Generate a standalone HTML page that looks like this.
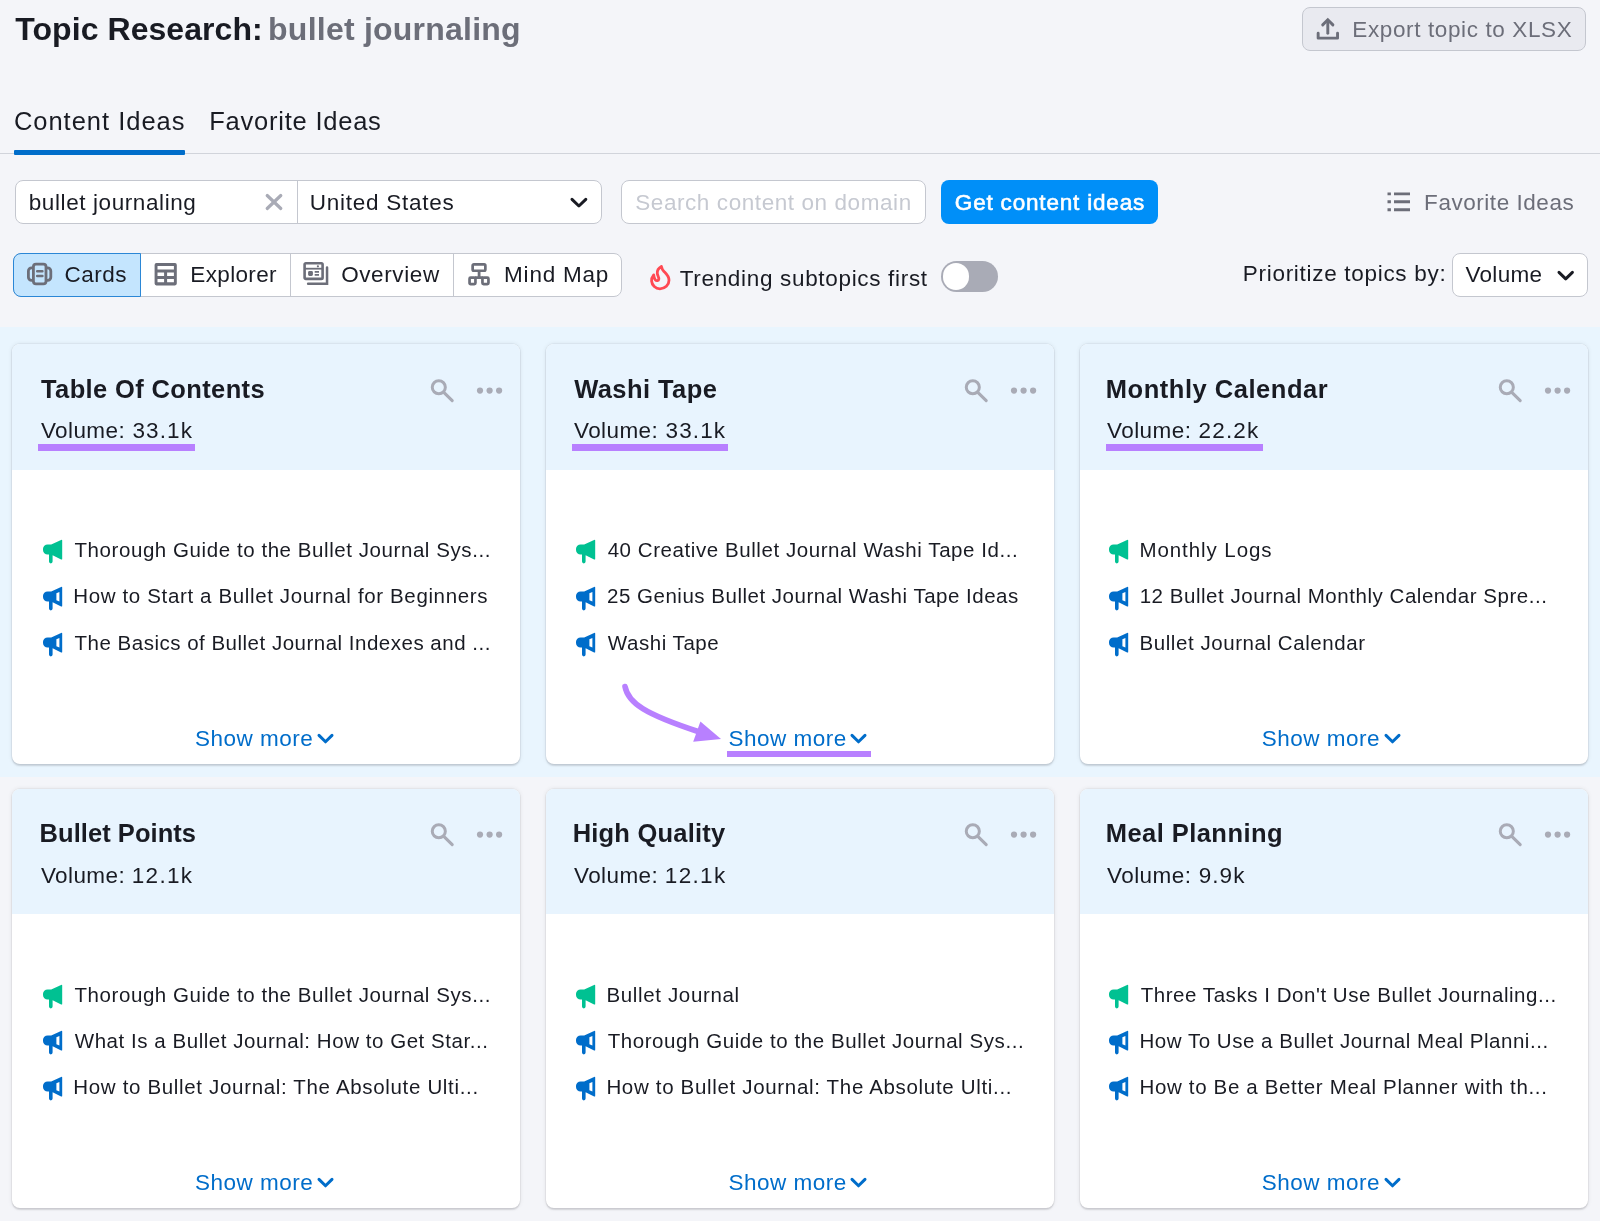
<!DOCTYPE html>
<html lang="en">
<head>
<meta charset="utf-8">
<title>Topic Research: bullet journaling</title>
<style>
*{box-sizing:border-box;margin:0;padding:0}
html,body{width:1600px;height:1221px;overflow:hidden}
body{background:#f4f5f9;font-family:"Liberation Sans",sans-serif;color:#191b23;position:relative}
#page{position:absolute;left:0;top:0;width:1600px;height:1221px;will-change:transform}
.abs{position:absolute}
.tx{position:absolute;white-space:pre;line-height:1}
svg{position:absolute;overflow:visible}
.box{position:absolute;background:#fff;border:1px solid #c4c7cf;border-radius:8px}
#band{left:0;top:327px;width:1600px;height:450px;background:#e9f5fe}
.card{position:absolute;width:508.4px;height:420px;background:#fff;border-radius:8px;box-shadow:0 0 0 1px rgba(25,27,35,.035),0 0 5px rgba(25,27,35,.09),0 1.5px 1.5px rgba(25,27,35,.12);overflow:hidden}
.card .hd{position:absolute;left:0;top:0;width:100%;height:125.8px;background:#e8f4fe}
.hl{position:absolute;background:#b880ff;height:6.5px}
</style>
</head>
<body>
<div id="page">
<div id="band" class="abs"></div>

<!-- export button -->
<div class="abs" style="left:1301.5px;top:7px;width:284.5px;height:44px;border:1px solid #c4c7cf;border-radius:8px;background:#e9eaf0"></div>
<svg width="24" height="24" viewBox="0 0 24 24" style="left:1316px;top:17px"><g fill="none" stroke="#6c6e79" stroke-width="2.9" stroke-linecap="round"><path d="M2.15 16.3 V21.15 H21.55 V16.3" stroke-linejoin="round"/><path d="M11.8 16.2 V3.4"/><path d="M6.7 7.9 L11.8 2.8 L16.9 7.9" stroke-linejoin="miter"/></g></svg>

<!-- tabs -->
<div class="abs" style="left:0;top:153px;width:1600px;height:1px;background:#d1d4db"></div>
<div class="abs" style="left:14.25px;top:149.5px;width:170.25px;height:5px;background:#006dca;border-radius:1px"></div>

<!-- filter row -->
<div class="box" style="left:14.5px;top:179.5px;width:587px;height:44px"></div>
<div class="abs" style="left:297px;top:180.5px;width:1px;height:42px;background:#c4c7cf"></div>
<svg width="18" height="18" viewBox="0 0 18 18" style="left:264.75px;top:192.5px"><path d="M2.2 2.5 L15.8 15.5 M15.8 2.5 L2.2 15.5" stroke="#a9abb6" stroke-width="3.2" stroke-linecap="round"/></svg>
<svg width="18" height="12" viewBox="0 0 18 12" style="left:569.5px;top:197px"><path d="M2 2.4 L8.9 9 L15.8 2.4" fill="none" stroke="#191b23" stroke-width="3" stroke-linecap="round" stroke-linejoin="round"/></svg>
<div class="box" style="left:621px;top:179.5px;width:304.5px;height:44px"></div>
<div class="abs" style="left:941.25px;top:179.5px;width:216.25px;height:44.25px;border-radius:8px;background:#008ff8"></div>
<svg width="24" height="20" viewBox="0 0 24 20" style="left:1387px;top:191.5px"><path d="M7 1.85 H23 M7 9.8 H23 M7 17.75 H23 M.5 1.85 H3.9 M.5 9.8 H3.9 M.5 17.75 H3.9" stroke="#6c6e79" stroke-width="2.9"/></svg>

<!-- view switch -->
<div class="box" style="left:13px;top:252.5px;width:608.5px;height:44.25px"></div>
<div class="abs" style="left:13px;top:252.5px;width:127.5px;height:44.25px;background:#c4e5fe;border:1px solid #2b87d6;border-radius:8px 0 0 8px"></div>
<div class="abs" style="left:289.5px;top:253.5px;width:1px;height:42px;background:#c4c7cf"></div>
<div class="abs" style="left:453px;top:253.5px;width:1px;height:42px;background:#c4c7cf"></div>
<!-- icons: cards, explorer, overview, mindmap -->
<svg width="26" height="24" viewBox="0 0 26 24" style="left:27px;top:262px"><g fill="none" stroke="#6c6e79" stroke-width="2.8"><path d="M6.2 5.9 H4.6 a3.2 3.2 0 0 0 -3.2 3.2 V15.2 a3.2 3.2 0 0 0 3.2 3.2 H6.2 M19.2 5.9 H20.6 a3.2 3.2 0 0 1 3.2 3.2 V15.2 a3.2 3.2 0 0 1 -3.2 3.2 H19.2"/><rect x="6.4" y="2.2" width="12.6" height="19.6" rx="2.6"/><path d="M10.2 9.3 H15.4 M10.2 14 H15.4" stroke-width="2.5" stroke-linecap="round"/></g></svg>
<svg width="24" height="24" viewBox="0 0 24 24" style="left:154px;top:262px"><path fill-rule="evenodd" fill="#6c6e79" d="M2.4 1.1 H21 A1.8 1.8 0 0 1 22.8 2.9 V21.6 A1.8 1.8 0 0 1 21 23.4 H2.4 A1.8 1.8 0 0 1 .6 21.6 V2.9 A1.8 1.8 0 0 1 2.4 1.1Z M3.5 4 V7.6 H19.9 V4Z M3.5 10.5 V13.9 H10.1 V10.5Z M13.1 10.5 V13.9 H19.9 V10.5Z M3.5 16.9 V20.2 H10.1 V16.9Z M13.1 16.9 V20.2 H19.9 V16.9Z"/></svg>
<svg width="26" height="24" viewBox="0 0 26 24" style="left:303px;top:261px"><g fill="none" stroke="#6c6e79"><rect x="1.6" y="2.2" width="18" height="15.7" rx="1.2" stroke-width="2.6"/><path d="M2 7.7 H19" stroke-width="1.8"/><path d="M11.7 10.8 H16 M11.7 13.9 H16" stroke-width="1.7"/><path d="M24.05 6.6 V22.65 H5.1" stroke-width="2.5" stroke-linecap="round" stroke-linejoin="miter"/></g><rect x="5.1" y="9.9" width="4.8" height="5" rx="1.3" fill="#6c6e79"/><circle cx="14.9" cy="5.3" r="1.1" fill="#6c6e79"/></svg>
<svg width="24" height="24" viewBox="0 0 24 24" style="left:467px;top:262px"><g fill="none" stroke="#6c6e79" stroke-width="2.7"><rect x="5.65" y="2.45" width="12.7" height="6.3" rx="1.2"/><rect x="2.55" y="15.55" width="5.9" height="6.5" rx="1.1"/><rect x="15.45" y="15.55" width="6" height="6.5" rx="1.1"/><path d="M12.1 9.5 V15 M8 15.55 H16" stroke-width="2.8"/></g></svg>
<!-- flame -->
<svg width="22" height="28" viewBox="0 0 22 28" style="left:649px;top:264px"><path d="M4.7 10.8 C3 13 2.4 15 2.6 17 C3 21.5 6.5 24.8 11 24.8 C16 24.8 20 21 20 16.2 C20 12 17 9.5 15 7.5 C13.6 6 12.8 4.4 12.4 2.4 C9.5 4 8 6.5 8.3 9.5 C8.5 11.5 10 13 9.8 15 C9.6 16.8 7.5 17.2 6.3 15.8 C5.3 14.6 4.9 12.8 4.7 10.8Z" fill="none" stroke="#ff4953" stroke-width="2.8" stroke-linejoin="round"/></svg>
<!-- toggle -->
<div class="abs" style="left:940.5px;top:260.75px;width:57px;height:31.25px;border-radius:16px;background:#a9abb6"></div>
<div class="abs" style="left:943px;top:263.25px;width:26.25px;height:26.25px;border-radius:50%;background:#fff"></div>
<!-- select -->
<div class="box" style="left:1451.5px;top:252.5px;width:136px;height:44px"></div>
<svg width="18" height="12" viewBox="0 0 18 12" style="left:1556.5px;top:270px"><path d="M2 2.4 L8.7 8.8 L15.4 2.4" fill="none" stroke="#191b23" stroke-width="3" stroke-linecap="round" stroke-linejoin="round"/></svg>

<div class="tx" style="left:15.25px;top:13px;font-size:32px;letter-spacing:0.062px;color:#191b23;font-weight:700">Topic Research:</div>
<div class="tx" style="left:268.10px;top:13px;font-size:32px;letter-spacing:0.229px;color:#6c6e79;font-weight:700">bullet journaling</div>
<div class="tx" style="left:1352.35px;top:19px;font-size:22.5px;letter-spacing:0.621px;color:#6c6e79">Export topic to XLSX</div>
<div class="tx" style="left:13.89px;top:109px;font-size:25.5px;letter-spacing:0.988px;color:#191b23">Content Ideas</div>
<div class="tx" style="left:209.25px;top:109px;font-size:25.5px;letter-spacing:0.770px;color:#191b23">Favorite Ideas</div>
<div class="tx" style="left:28.73px;top:192px;font-size:22.5px;letter-spacing:0.596px;color:#191b23">bullet journaling</div>
<div class="tx" style="left:309.70px;top:192px;font-size:22.5px;letter-spacing:0.745px;color:#191b23">United States</div>
<div class="tx" style="left:635.21px;top:192px;font-size:22.5px;letter-spacing:0.579px;color:#c6c9d1">Search content on domain</div>
<div class="tx" style="left:954.86px;top:192px;font-size:22.5px;letter-spacing:0.812px;color:#fff;font-weight:400;-webkit-text-stroke:0.6px currentColor">Get content ideas</div>
<div class="tx" style="left:1424.10px;top:192px;font-size:22.5px;letter-spacing:0.541px;color:#6c6e79">Favorite Ideas</div>
<div class="tx" style="left:64.50px;top:264px;font-size:22.5px;letter-spacing:0.472px;color:#191b23">Cards</div>
<div class="tx" style="left:190.35px;top:264px;font-size:22.5px;letter-spacing:0.337px;color:#191b23">Explorer</div>
<div class="tx" style="left:341.17px;top:264px;font-size:22.5px;letter-spacing:0.603px;color:#191b23">Overview</div>
<div class="tx" style="left:504.10px;top:264px;font-size:22.5px;letter-spacing:0.772px;color:#191b23">Mind Map</div>
<div class="tx" style="left:679.70px;top:268px;font-size:22.5px;letter-spacing:0.679px;color:#191b23">Trending subtopics first</div>
<div class="tx" style="left:1242.85px;top:263px;font-size:22.5px;letter-spacing:0.700px;color:#191b23">Prioritize topics by:</div>
<div class="tx" style="left:1465.39px;top:264px;font-size:22.5px;letter-spacing:0.335px;color:#191b23">Volume</div>

<!-- CARDS -->
<div class="card" style="left:12px;top:344px;height:420px">
<div class="hd"></div>
<h3 class="tx" style="left:29.03px;top:33px;font-size:25.5px;letter-spacing:0.372px;color:#191b23;font-weight:700">Table Of Contents</h3>
<div class="tx" style="left:28.89px;top:76px;font-size:22.5px;letter-spacing:0.420px;color:#191b23">Volume:</div>
<div class="tx" style="left:120.50px;top:76px;font-size:22.5px;letter-spacing:1.089px;color:#191b23">33.1k</div>
<svg width="32" height="32" viewBox="0 0 32 32" style="left:411px;top:29px"><circle cx="15.8" cy="14.2" r="6.55" fill="none" stroke="#a9abb6" stroke-width="3"/><path d="M20.8 19.4 L29.2 27.6" stroke="#a9abb6" stroke-width="3.1" stroke-linecap="round"/></svg>
<svg width="30" height="10" viewBox="0 0 30 10" style="left:464px;top:42px"><circle cx="4" cy="4.6" r="3.1" fill="#a9abb6"/><circle cx="13.6" cy="4.6" r="3.1" fill="#a9abb6"/><circle cx="23.1" cy="4.6" r="3.1" fill="#a9abb6"/></svg>
<svg width="20" height="25" viewBox="0 0 20 25" style="left:31.1px;top:195px"><path fill-rule="evenodd" d="M19.2 1.6 Q19.2 .4 18.1 .9 L8.2 5.4 H4.6 A4.6 4.6 0 0 0 0 10 v1 A4.6 4.6 0 0 0 4.6 15.6 H6 V22.6 a1.8 1.8 0 0 0 3.6 0 V16.2 L18.1 20.4 Q19.2 20.9 19.2 19.7Z" fill="#00c192"/></svg>
<div class="tx" style="left:62.54px;top:196px;font-size:20.5px;letter-spacing:0.567px;color:#191b23">Thorough Guide to the Bullet Journal Sys...</div>
<svg width="20" height="25" viewBox="0 0 20 25" style="left:31.1px;top:241.5px"><path fill-rule="evenodd" d="M19.2 1.6 Q19.2 .4 18.1 .9 L8.2 5.4 H4.6 A4.6 4.6 0 0 0 0 10 v1 A4.6 4.6 0 0 0 4.6 15.6 H6 V22.6 a1.8 1.8 0 0 0 3.6 0 V16.2 L18.1 20.4 Q19.2 20.9 19.2 19.7Z M16.4 5.9 L13.4 7.2 V14.3 L16.4 15.6Z" fill="#006dca"/></svg>
<div class="tx" style="left:61.29px;top:242px;font-size:20.5px;letter-spacing:0.637px;color:#191b23">How to Start a Bullet Journal for Beginners</div>
<svg width="20" height="25" viewBox="0 0 20 25" style="left:31.1px;top:287.5px"><path fill-rule="evenodd" d="M19.2 1.6 Q19.2 .4 18.1 .9 L8.2 5.4 H4.6 A4.6 4.6 0 0 0 0 10 v1 A4.6 4.6 0 0 0 4.6 15.6 H6 V22.6 a1.8 1.8 0 0 0 3.6 0 V16.2 L18.1 20.4 Q19.2 20.9 19.2 19.7Z M16.4 5.9 L13.4 7.2 V14.3 L16.4 15.6Z" fill="#006dca"/></svg>
<div class="tx" style="left:62.54px;top:289px;font-size:20.5px;letter-spacing:0.501px;color:#191b23">The Basics of Bullet Journal Indexes and ...</div>
<div class="tx" style="left:182.95px;top:384px;font-size:22.5px;letter-spacing:0.492px;color:#006dca">Show more</div>
<svg width="18" height="12" viewBox="0 0 18 12" style="left:304.84px;top:389px"><path d="M2 2.4 L8.5 8.8 L15 2.4" fill="none" stroke="#006dca" stroke-width="3" stroke-linecap="round" stroke-linejoin="round"/></svg>
</div>
<div class="card" style="left:546px;top:344px;height:420px">
<div class="hd"></div>
<h3 class="tx" style="left:28.20px;top:33px;font-size:25.5px;letter-spacing:0.420px;color:#191b23;font-weight:700">Washi Tape</h3>
<div class="tx" style="left:27.99px;top:76px;font-size:22.5px;letter-spacing:0.420px;color:#191b23">Volume:</div>
<div class="tx" style="left:119.60px;top:76px;font-size:22.5px;letter-spacing:1.089px;color:#191b23">33.1k</div>
<svg width="32" height="32" viewBox="0 0 32 32" style="left:411px;top:29px"><circle cx="15.8" cy="14.2" r="6.55" fill="none" stroke="#a9abb6" stroke-width="3"/><path d="M20.8 19.4 L29.2 27.6" stroke="#a9abb6" stroke-width="3.1" stroke-linecap="round"/></svg>
<svg width="30" height="10" viewBox="0 0 30 10" style="left:464px;top:42px"><circle cx="4" cy="4.6" r="3.1" fill="#a9abb6"/><circle cx="13.6" cy="4.6" r="3.1" fill="#a9abb6"/><circle cx="23.1" cy="4.6" r="3.1" fill="#a9abb6"/></svg>
<svg width="20" height="25" viewBox="0 0 20 25" style="left:30.2px;top:195px"><path fill-rule="evenodd" d="M19.2 1.6 Q19.2 .4 18.1 .9 L8.2 5.4 H4.6 A4.6 4.6 0 0 0 0 10 v1 A4.6 4.6 0 0 0 4.6 15.6 H6 V22.6 a1.8 1.8 0 0 0 3.6 0 V16.2 L18.1 20.4 Q19.2 20.9 19.2 19.7Z" fill="#00c192"/></svg>
<div class="tx" style="left:61.64px;top:196px;font-size:20.5px;letter-spacing:0.568px;color:#191b23">40 Creative Bullet Journal Washi Tape Id...</div>
<svg width="20" height="25" viewBox="0 0 20 25" style="left:30.2px;top:241.5px"><path fill-rule="evenodd" d="M19.2 1.6 Q19.2 .4 18.1 .9 L8.2 5.4 H4.6 A4.6 4.6 0 0 0 0 10 v1 A4.6 4.6 0 0 0 4.6 15.6 H6 V22.6 a1.8 1.8 0 0 0 3.6 0 V16.2 L18.1 20.4 Q19.2 20.9 19.2 19.7Z M16.4 5.9 L13.4 7.2 V14.3 L16.4 15.6Z" fill="#006dca"/></svg>
<div class="tx" style="left:61.08px;top:242px;font-size:20.5px;letter-spacing:0.508px;color:#191b23">25 Genius Bullet Journal Washi Tape Ideas</div>
<svg width="20" height="25" viewBox="0 0 20 25" style="left:30.2px;top:287.5px"><path fill-rule="evenodd" d="M19.2 1.6 Q19.2 .4 18.1 .9 L8.2 5.4 H4.6 A4.6 4.6 0 0 0 0 10 v1 A4.6 4.6 0 0 0 4.6 15.6 H6 V22.6 a1.8 1.8 0 0 0 3.6 0 V16.2 L18.1 20.4 Q19.2 20.9 19.2 19.7Z M16.4 5.9 L13.4 7.2 V14.3 L16.4 15.6Z" fill="#006dca"/></svg>
<div class="tx" style="left:61.86px;top:289px;font-size:20.5px;letter-spacing:0.540px;color:#191b23">Washi Tape</div>
<div class="tx" style="left:182.41px;top:384px;font-size:22.5px;letter-spacing:0.492px;color:#006dca">Show more</div>
<svg width="18" height="12" viewBox="0 0 18 12" style="left:304.3px;top:389px"><path d="M2 2.4 L8.5 8.8 L15 2.4" fill="none" stroke="#006dca" stroke-width="3" stroke-linecap="round" stroke-linejoin="round"/></svg>
</div>
<div class="card" style="left:1080px;top:344px;height:420px">
<div class="hd"></div>
<h3 class="tx" style="left:25.77px;top:33px;font-size:25.5px;letter-spacing:0.532px;color:#191b23;font-weight:700">Monthly Calendar</h3>
<div class="tx" style="left:27.09px;top:76px;font-size:22.5px;letter-spacing:0.420px;color:#191b23">Volume:</div>
<div class="tx" style="left:118.50px;top:76px;font-size:22.5px;letter-spacing:1.187px;color:#191b23">22.2k</div>
<svg width="32" height="32" viewBox="0 0 32 32" style="left:411px;top:29px"><circle cx="15.8" cy="14.2" r="6.55" fill="none" stroke="#a9abb6" stroke-width="3"/><path d="M20.8 19.4 L29.2 27.6" stroke="#a9abb6" stroke-width="3.1" stroke-linecap="round"/></svg>
<svg width="30" height="10" viewBox="0 0 30 10" style="left:464px;top:42px"><circle cx="4" cy="4.6" r="3.1" fill="#a9abb6"/><circle cx="13.6" cy="4.6" r="3.1" fill="#a9abb6"/><circle cx="23.1" cy="4.6" r="3.1" fill="#a9abb6"/></svg>
<svg width="20" height="25" viewBox="0 0 20 25" style="left:29.3px;top:195px"><path fill-rule="evenodd" d="M19.2 1.6 Q19.2 .4 18.1 .9 L8.2 5.4 H4.6 A4.6 4.6 0 0 0 0 10 v1 A4.6 4.6 0 0 0 4.6 15.6 H6 V22.6 a1.8 1.8 0 0 0 3.6 0 V16.2 L18.1 20.4 Q19.2 20.9 19.2 19.7Z" fill="#00c192"/></svg>
<div class="tx" style="left:59.49px;top:196px;font-size:20.5px;letter-spacing:0.919px;color:#191b23">Monthly Logs</div>
<svg width="20" height="25" viewBox="0 0 20 25" style="left:29.3px;top:241.5px"><path fill-rule="evenodd" d="M19.2 1.6 Q19.2 .4 18.1 .9 L8.2 5.4 H4.6 A4.6 4.6 0 0 0 0 10 v1 A4.6 4.6 0 0 0 4.6 15.6 H6 V22.6 a1.8 1.8 0 0 0 3.6 0 V16.2 L18.1 20.4 Q19.2 20.9 19.2 19.7Z M16.4 5.9 L13.4 7.2 V14.3 L16.4 15.6Z" fill="#006dca"/></svg>
<div class="tx" style="left:59.63px;top:242px;font-size:20.5px;letter-spacing:0.540px;color:#191b23">12 Bullet Journal Monthly Calendar Spre...</div>
<svg width="20" height="25" viewBox="0 0 20 25" style="left:29.3px;top:287.5px"><path fill-rule="evenodd" d="M19.2 1.6 Q19.2 .4 18.1 .9 L8.2 5.4 H4.6 A4.6 4.6 0 0 0 0 10 v1 A4.6 4.6 0 0 0 4.6 15.6 H6 V22.6 a1.8 1.8 0 0 0 3.6 0 V16.2 L18.1 20.4 Q19.2 20.9 19.2 19.7Z M16.4 5.9 L13.4 7.2 V14.3 L16.4 15.6Z" fill="#006dca"/></svg>
<div class="tx" style="left:59.49px;top:289px;font-size:20.5px;letter-spacing:0.563px;color:#191b23">Bullet Journal Calendar</div>
<div class="tx" style="left:181.87px;top:384px;font-size:22.5px;letter-spacing:0.492px;color:#006dca">Show more</div>
<svg width="18" height="12" viewBox="0 0 18 12" style="left:303.76px;top:389px"><path d="M2 2.4 L8.5 8.8 L15 2.4" fill="none" stroke="#006dca" stroke-width="3" stroke-linecap="round" stroke-linejoin="round"/></svg>
</div>
<div class="card" style="left:12px;top:788.5px;height:419.8px">
<div class="hd"></div>
<h3 class="tx" style="left:27.57px;top:32.5px;font-size:25.5px;letter-spacing:0.052px;color:#191b23;font-weight:700">Bullet Points</h3>
<div class="tx" style="left:28.89px;top:76.5px;font-size:22.5px;letter-spacing:0.420px;color:#191b23">Volume:</div>
<div class="tx" style="left:119.76px;top:76.5px;font-size:22.5px;letter-spacing:1.322px;color:#191b23">12.1k</div>
<svg width="32" height="32" viewBox="0 0 32 32" style="left:411px;top:28.5px"><circle cx="15.8" cy="14.2" r="6.55" fill="none" stroke="#a9abb6" stroke-width="3"/><path d="M20.8 19.4 L29.2 27.6" stroke="#a9abb6" stroke-width="3.1" stroke-linecap="round"/></svg>
<svg width="30" height="10" viewBox="0 0 30 10" style="left:464px;top:41.5px"><circle cx="4" cy="4.6" r="3.1" fill="#a9abb6"/><circle cx="13.6" cy="4.6" r="3.1" fill="#a9abb6"/><circle cx="23.1" cy="4.6" r="3.1" fill="#a9abb6"/></svg>
<svg width="20" height="25" viewBox="0 0 20 25" style="left:31.1px;top:195px"><path fill-rule="evenodd" d="M19.2 1.6 Q19.2 .4 18.1 .9 L8.2 5.4 H4.6 A4.6 4.6 0 0 0 0 10 v1 A4.6 4.6 0 0 0 4.6 15.6 H6 V22.6 a1.8 1.8 0 0 0 3.6 0 V16.2 L18.1 20.4 Q19.2 20.9 19.2 19.7Z" fill="#00c192"/></svg>
<div class="tx" style="left:62.54px;top:196.5px;font-size:20.5px;letter-spacing:0.567px;color:#191b23">Thorough Guide to the Bullet Journal Sys...</div>
<svg width="20" height="25" viewBox="0 0 20 25" style="left:31.1px;top:241.5px"><path fill-rule="evenodd" d="M19.2 1.6 Q19.2 .4 18.1 .9 L8.2 5.4 H4.6 A4.6 4.6 0 0 0 0 10 v1 A4.6 4.6 0 0 0 4.6 15.6 H6 V22.6 a1.8 1.8 0 0 0 3.6 0 V16.2 L18.1 20.4 Q19.2 20.9 19.2 19.7Z M16.4 5.9 L13.4 7.2 V14.3 L16.4 15.6Z" fill="#006dca"/></svg>
<div class="tx" style="left:62.76px;top:242.5px;font-size:20.5px;letter-spacing:0.547px;color:#191b23">What Is a Bullet Journal: How to Get Star...</div>
<svg width="20" height="25" viewBox="0 0 20 25" style="left:31.1px;top:287.5px"><path fill-rule="evenodd" d="M19.2 1.6 Q19.2 .4 18.1 .9 L8.2 5.4 H4.6 A4.6 4.6 0 0 0 0 10 v1 A4.6 4.6 0 0 0 4.6 15.6 H6 V22.6 a1.8 1.8 0 0 0 3.6 0 V16.2 L18.1 20.4 Q19.2 20.9 19.2 19.7Z M16.4 5.9 L13.4 7.2 V14.3 L16.4 15.6Z" fill="#006dca"/></svg>
<div class="tx" style="left:61.29px;top:288.5px;font-size:20.5px;letter-spacing:0.667px;color:#191b23">How to Bullet Journal: The Absolute Ulti...</div>
<div class="tx" style="left:182.95px;top:383.5px;font-size:22.5px;letter-spacing:0.492px;color:#006dca">Show more</div>
<svg width="18" height="12" viewBox="0 0 18 12" style="left:304.84px;top:388.5px"><path d="M2 2.4 L8.5 8.8 L15 2.4" fill="none" stroke="#006dca" stroke-width="3" stroke-linecap="round" stroke-linejoin="round"/></svg>
</div>
<div class="card" style="left:546px;top:788.5px;height:419.8px">
<div class="hd"></div>
<h3 class="tx" style="left:26.67px;top:32.5px;font-size:25.5px;letter-spacing:0.211px;color:#191b23;font-weight:700">High Quality</h3>
<div class="tx" style="left:27.99px;top:76.5px;font-size:22.5px;letter-spacing:0.420px;color:#191b23">Volume:</div>
<div class="tx" style="left:118.86px;top:76.5px;font-size:22.5px;letter-spacing:1.322px;color:#191b23">12.1k</div>
<svg width="32" height="32" viewBox="0 0 32 32" style="left:411px;top:28.5px"><circle cx="15.8" cy="14.2" r="6.55" fill="none" stroke="#a9abb6" stroke-width="3"/><path d="M20.8 19.4 L29.2 27.6" stroke="#a9abb6" stroke-width="3.1" stroke-linecap="round"/></svg>
<svg width="30" height="10" viewBox="0 0 30 10" style="left:464px;top:41.5px"><circle cx="4" cy="4.6" r="3.1" fill="#a9abb6"/><circle cx="13.6" cy="4.6" r="3.1" fill="#a9abb6"/><circle cx="23.1" cy="4.6" r="3.1" fill="#a9abb6"/></svg>
<svg width="20" height="25" viewBox="0 0 20 25" style="left:30.2px;top:195px"><path fill-rule="evenodd" d="M19.2 1.6 Q19.2 .4 18.1 .9 L8.2 5.4 H4.6 A4.6 4.6 0 0 0 0 10 v1 A4.6 4.6 0 0 0 4.6 15.6 H6 V22.6 a1.8 1.8 0 0 0 3.6 0 V16.2 L18.1 20.4 Q19.2 20.9 19.2 19.7Z" fill="#00c192"/></svg>
<div class="tx" style="left:60.39px;top:196.5px;font-size:20.5px;letter-spacing:0.657px;color:#191b23">Bullet Journal</div>
<svg width="20" height="25" viewBox="0 0 20 25" style="left:30.2px;top:241.5px"><path fill-rule="evenodd" d="M19.2 1.6 Q19.2 .4 18.1 .9 L8.2 5.4 H4.6 A4.6 4.6 0 0 0 0 10 v1 A4.6 4.6 0 0 0 4.6 15.6 H6 V22.6 a1.8 1.8 0 0 0 3.6 0 V16.2 L18.1 20.4 Q19.2 20.9 19.2 19.7Z M16.4 5.9 L13.4 7.2 V14.3 L16.4 15.6Z" fill="#006dca"/></svg>
<div class="tx" style="left:61.64px;top:242.5px;font-size:20.5px;letter-spacing:0.571px;color:#191b23">Thorough Guide to the Bullet Journal Sys...</div>
<svg width="20" height="25" viewBox="0 0 20 25" style="left:30.2px;top:287.5px"><path fill-rule="evenodd" d="M19.2 1.6 Q19.2 .4 18.1 .9 L8.2 5.4 H4.6 A4.6 4.6 0 0 0 0 10 v1 A4.6 4.6 0 0 0 4.6 15.6 H6 V22.6 a1.8 1.8 0 0 0 3.6 0 V16.2 L18.1 20.4 Q19.2 20.9 19.2 19.7Z M16.4 5.9 L13.4 7.2 V14.3 L16.4 15.6Z" fill="#006dca"/></svg>
<div class="tx" style="left:60.39px;top:288.5px;font-size:20.5px;letter-spacing:0.674px;color:#191b23">How to Bullet Journal: The Absolute Ulti...</div>
<div class="tx" style="left:182.41px;top:383.5px;font-size:22.5px;letter-spacing:0.492px;color:#006dca">Show more</div>
<svg width="18" height="12" viewBox="0 0 18 12" style="left:304.3px;top:388.5px"><path d="M2 2.4 L8.5 8.8 L15 2.4" fill="none" stroke="#006dca" stroke-width="3" stroke-linecap="round" stroke-linejoin="round"/></svg>
</div>
<div class="card" style="left:1080px;top:788.5px;height:419.8px">
<div class="hd"></div>
<h3 class="tx" style="left:25.77px;top:32.5px;font-size:25.5px;letter-spacing:0.443px;color:#191b23;font-weight:700">Meal Planning</h3>
<div class="tx" style="left:27.09px;top:76.5px;font-size:22.5px;letter-spacing:0.420px;color:#191b23">Volume:</div>
<div class="tx" style="left:118.67px;top:76.5px;font-size:22.5px;letter-spacing:1.085px;color:#191b23">9.9k</div>
<svg width="32" height="32" viewBox="0 0 32 32" style="left:411px;top:28.5px"><circle cx="15.8" cy="14.2" r="6.55" fill="none" stroke="#a9abb6" stroke-width="3"/><path d="M20.8 19.4 L29.2 27.6" stroke="#a9abb6" stroke-width="3.1" stroke-linecap="round"/></svg>
<svg width="30" height="10" viewBox="0 0 30 10" style="left:464px;top:41.5px"><circle cx="4" cy="4.6" r="3.1" fill="#a9abb6"/><circle cx="13.6" cy="4.6" r="3.1" fill="#a9abb6"/><circle cx="23.1" cy="4.6" r="3.1" fill="#a9abb6"/></svg>
<svg width="20" height="25" viewBox="0 0 20 25" style="left:29.3px;top:195px"><path fill-rule="evenodd" d="M19.2 1.6 Q19.2 .4 18.1 .9 L8.2 5.4 H4.6 A4.6 4.6 0 0 0 0 10 v1 A4.6 4.6 0 0 0 4.6 15.6 H6 V22.6 a1.8 1.8 0 0 0 3.6 0 V16.2 L18.1 20.4 Q19.2 20.9 19.2 19.7Z" fill="#00c192"/></svg>
<div class="tx" style="left:60.74px;top:196.5px;font-size:20.5px;letter-spacing:0.543px;color:#191b23">Three Tasks I Don't Use Bullet Journaling...</div>
<svg width="20" height="25" viewBox="0 0 20 25" style="left:29.3px;top:241.5px"><path fill-rule="evenodd" d="M19.2 1.6 Q19.2 .4 18.1 .9 L8.2 5.4 H4.6 A4.6 4.6 0 0 0 0 10 v1 A4.6 4.6 0 0 0 4.6 15.6 H6 V22.6 a1.8 1.8 0 0 0 3.6 0 V16.2 L18.1 20.4 Q19.2 20.9 19.2 19.7Z M16.4 5.9 L13.4 7.2 V14.3 L16.4 15.6Z" fill="#006dca"/></svg>
<div class="tx" style="left:59.49px;top:242.5px;font-size:20.5px;letter-spacing:0.526px;color:#191b23">How To Use a Bullet Journal Meal Planni...</div>
<svg width="20" height="25" viewBox="0 0 20 25" style="left:29.3px;top:287.5px"><path fill-rule="evenodd" d="M19.2 1.6 Q19.2 .4 18.1 .9 L8.2 5.4 H4.6 A4.6 4.6 0 0 0 0 10 v1 A4.6 4.6 0 0 0 4.6 15.6 H6 V22.6 a1.8 1.8 0 0 0 3.6 0 V16.2 L18.1 20.4 Q19.2 20.9 19.2 19.7Z M16.4 5.9 L13.4 7.2 V14.3 L16.4 15.6Z" fill="#006dca"/></svg>
<div class="tx" style="left:59.49px;top:288.5px;font-size:20.5px;letter-spacing:0.654px;color:#191b23">How to Be a Better Meal Planner with th...</div>
<div class="tx" style="left:181.87px;top:383.5px;font-size:22.5px;letter-spacing:0.492px;color:#006dca">Show more</div>
<svg width="18" height="12" viewBox="0 0 18 12" style="left:303.76px;top:388.5px"><path d="M2 2.4 L8.5 8.8 L15 2.4" fill="none" stroke="#006dca" stroke-width="3" stroke-linecap="round" stroke-linejoin="round"/></svg>
</div>

<!-- annotations -->
<div class="hl" style="left:37.75px;top:444.4px;width:157.25px"></div>
<div class="hl" style="left:572.1px;top:444.4px;width:155.7px"></div>
<div class="hl" style="left:1105.5px;top:444.4px;width:157px"></div>
<div class="hl" style="left:726.9px;top:751.1px;width:143.7px;height:6.4px"></div>
<svg width="110" height="70" viewBox="0 0 110 70" style="left:615px;top:680.7px"><path d="M10 5.5 C13 22 30 33 83 50.5" fill="none" stroke="#b880ff" stroke-width="5.6" stroke-linecap="round"/><path d="M85.4 40.4 L106 57.9 L78.2 60.7Z" fill="#b880ff"/></svg>
</div>
</body>
</html>
